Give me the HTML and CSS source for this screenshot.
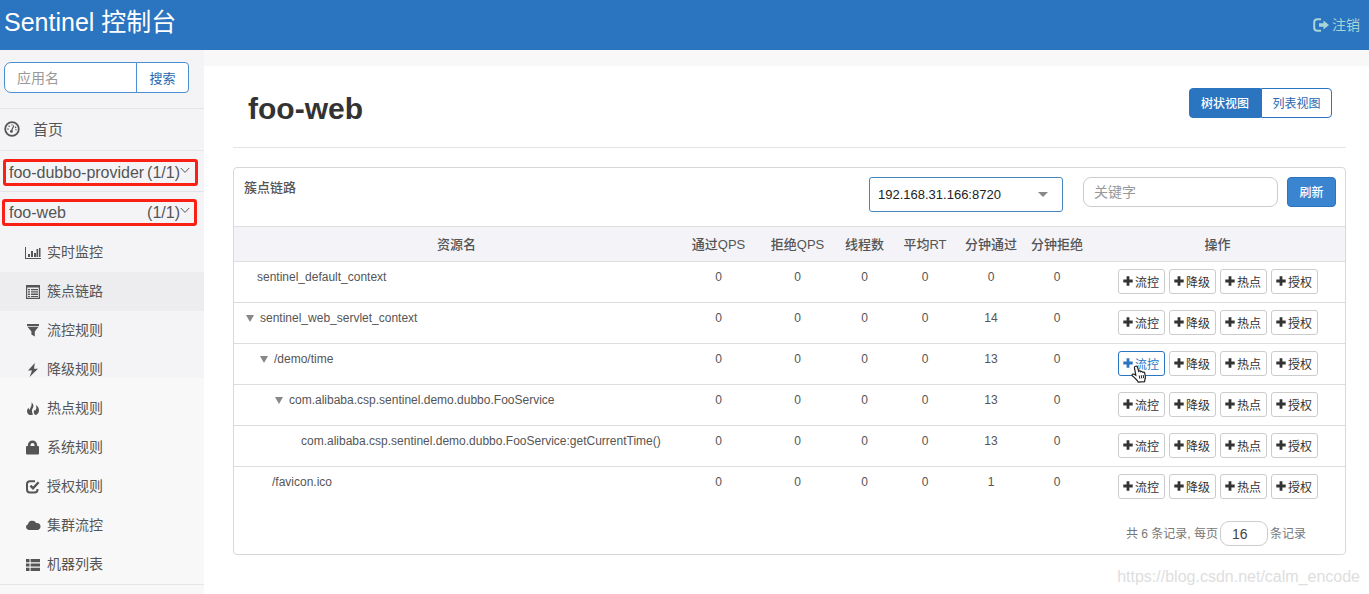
FILE: index.html
```
<!DOCTYPE html>
<html lang="zh-CN">
<head>
    <meta charset="utf-8">
    <title>Sentinel 控制台</title>
    <link rel="stylesheet" href="styles.css">
</head>
<body>
    <svg class="sprite" width="0" height="0">
        <symbol id="plus" viewBox="0 0 10 10"><path d="M3.6 0.3h2.8v3.3h3.3v2.8H6.4v3.3H3.6V6.4H0.3V3.6h3.3z"/></symbol>
    </svg>
    <header class="navbar">
        <a class="brand" href="#">Sentinel 控制台</a>
        <a class="logout" href="#">
            <svg width="16" height="14" viewBox="0 0 16 14"><path d="M8 1.2H4.5Q1.2 1.2 1.2 4.5v5q0 3.3 3.3 3.3H8" fill="none" stroke="currentColor" stroke-width="2"/><path d="M6 5.3h4.5V2.4L16 7l-5.5 4.6V8.7H6z" fill="currentColor"/></svg>
            <span>注销</span>
        </a>
    </header>
    <div class="wrapper">
        <nav class="sidebar">
            <form class="search">
                <input type="text" placeholder="应用名" aria-label="应用名">
                <button type="button">搜索</button>
            </form>
            <a class="home" href="#">
                <svg width="16" height="16" viewBox="0 0 16 16"><circle cx="8" cy="8" r="6.8" fill="none" stroke="currentColor" stroke-width="1.8"/><path d="M7.2 10.6l2.6-6.2" stroke="currentColor" stroke-width="1.2"/><circle cx="7.4" cy="10.4" r="1.4"/><circle cx="4" cy="8" r=".8"/><circle cx="5.2" cy="5.2" r=".8"/><circle cx="8" cy="3.9" r=".7"/><circle cx="11.6" cy="6.4" r=".8"/><circle cx="12" cy="8.8" r=".7"/></svg>
                <span>首页</span>
            </a>
            <div class="app-row">
                <a class="app" href="#">
                    <span class="app-name">foo-dubbo-provider</span>
                    <span>(1/1)</span>
                    <svg width="10" height="7" viewBox="0 0 10 7"><path d="M0.8 1L5 5.4 9.2 1" fill="none" stroke="currentColor"/></svg>
                </a>
            </div>
            <div class="app-row open">
                <a class="app" href="#">
                    <span class="app-name">foo-web</span>
                    <span>(1/1)</span>
                    <svg width="10" height="7" viewBox="0 0 10 7"><path d="M0.8 1L5 5.4 9.2 1" fill="none" stroke="currentColor"/></svg>
                </a>
            </div>
            <ul class="menu">
                <li><a href="#">
                    <svg width="16" height="16" viewBox="0 0 16 16"><path d="M0 2h1v11h15v1H0zM3 9h2v3H3zM6 6h2v6H6zM9 8h2v4H9zM11.5 4h1.7v8h-1.7zM14 3h1.5v9H14z"/></svg>
                    <span>实时监控</span></a></li>
                <li class="active"><a href="#">
                    <svg width="16" height="16" viewBox="0 0 16 16"><path d="M1.6 1.6h12.8v12.8H1.6z" fill="none" stroke="currentColor" stroke-width="1.2"/><path d="M1 1h14v2.4H1zM3 5h2v1.3H3zM6 5h7v1.3H6zM3 7.3h2v1.3H3zM6 7.3h7v1.3H6zM3 9.6h2v1.3H3zM6 9.6h7v1.3H6zM3 11.9h2v1H3zM6 11.9h7v1H6z"/></svg>
                    <span>簇点链路</span></a></li>
                <li><a href="#">
                    <svg width="16" height="16" viewBox="0 0 16 16"><path d="M2 1h12v2H2zM2.4 3.8h11.2L9.8 8.4v5.2L6.4 11.4v-3z"/></svg>
                    <span>流控规则</span></a></li>
                <li><a href="#">
                    <svg width="16" height="16" viewBox="0 0 16 16"><path d="M9.8 1L3 8.6h4L4.6 15 13 6.8H9z"/></svg>
                    <span>降级规则</span></a></li>
                <li><a href="#">
                    <svg width="16" height="16" viewBox="0 0 16 16"><path d="M6.4 1.2C8.8 3 9 5.4 7.6 7.6c-1 1.700-.8 4 .4 5.8C5.800 15.200 2.200 13.400 2 10.400c0-1.500.700-2.600 1.400-3.600.300 1 .600 1.700 1.300 2.200C4.800 7 7.500 4.600 6.400 1.200zM10.800 4c2.400 1.400 3.800 4 3 6.800-.5 1.900-1.900 3.100-3.600 3.300C8.600 12.200 8.300 10 9.400 8.400l.4 1.700c1.700-1.500 2-3.700 1-6.100z"/></svg>
                    <span>热点规则</span></a></li>
                <li><a href="#">
                    <svg width="16" height="16" viewBox="0 0 16 16"><rect x="1" y="6" width="13" height="8.500" rx="1"/><path d="M4.200 7V5a3.300 3.300 0 0 1 6.600 0V7" fill="none" stroke="currentColor" stroke-width="2.600"/></svg>
                    <span>系统规则</span></a></li>
                <li><a href="#">
                    <svg width="16" height="16" viewBox="0 0 16 16"><path d="M10 2.200H5Q2 2.200 2 5v5.500Q2 13.500 5 13.500h4.500q3 0 3-3V10" fill="none" stroke="currentColor" stroke-width="2"/><path d="M5.400 6.600L8 9.200l5.600-6" fill="none" stroke="currentColor" stroke-width="2.400"/></svg>
                    <span>授权规则</span></a></li>
                <li><a href="#">
                    <svg width="16" height="16" viewBox="0 0 16 16"><path d="M3.600 12A3 3 0 0 1 3 6.200a4.400 4.400 0 0 1 8.200-1.100A3.500 3.500 0 1 1 12.200 12z"/></svg>
                    <span>集群流控</span></a></li>
                <li><a href="#">
                    <svg width="16" height="16" viewBox="0 0 16 16"><path d="M1 2h3.500v3.200H1zM5.600 2H15v3.200H5.600zM1 6.400h3.500v3.200H1zM5.600 6.400H15v3.200H5.600zM1 10.800h3.500V14H1zM5.600 10.800H15V14H5.600z"/></svg>
                    <span>机器列表</span></a></li>
            </ul>
        </nav>
        <main class="content">
            <div class="page-header">
                <h1>foo-web</h1>
                <div class="view-switch">
                    <button type="button" class="active">树状视图</button>
                    <button type="button">列表视图</button>
                </div>
            </div>
            <section class="panel">
                <div class="toolbar">
                    <h2>簇点链路</h2>
                    <div class="machine">
                        <select aria-label="机器">
                            <option>192.168.31.166:8720</option>
                        </select>
                    </div>
                    <input class="keyword" type="text" placeholder="关键字" aria-label="关键字">
                    <button type="button" class="refresh">刷新</button>
                </div>
                <table>
                    <thead>
                        <tr>
                            <th>资源名</th>
                            <th class="col-qps">通过QPS</th>
                            <th class="col-qps">拒绝QPS</th>
                            <th class="col-thread">线程数</th>
                            <th class="col-num">平均RT</th>
                            <th class="col-num">分钟通过</th>
                            <th class="col-num">分钟拒绝</th>
                            <th class="col-actions">操作</th>
                        </tr>
                    </thead>
                    <tbody>
                        <tr>
                            <td class="leaf-root">sentinel_default_context</td>
                            <td>0</td><td>0</td><td>0</td><td>0</td><td>0</td><td>0</td>
                            <td><div class="actions">
                                <button type="button"><svg><use href="#plus"/></svg>流控</button>
                                <button type="button"><svg><use href="#plus"/></svg>降级</button>
                                <button type="button"><svg><use href="#plus"/></svg>热点</button>
                                <button type="button"><svg><use href="#plus"/></svg>授权</button>
                            </div></td>
                        </tr>
                        <tr>
                            <td class="level-1"><span class="caret"></span>sentinel_web_servlet_context</td>
                            <td>0</td><td>0</td><td>0</td><td>0</td><td>14</td><td>0</td>
                            <td><div class="actions">
                                <button type="button"><svg><use href="#plus"/></svg>流控</button>
                                <button type="button"><svg><use href="#plus"/></svg>降级</button>
                                <button type="button"><svg><use href="#plus"/></svg>热点</button>
                                <button type="button"><svg><use href="#plus"/></svg>授权</button>
                            </div></td>
                        </tr>
                        <tr>
                            <td class="level-2"><span class="caret"></span>/demo/time</td>
                            <td>0</td><td>0</td><td>0</td><td>0</td><td>13</td><td>0</td>
                            <td><div class="actions">
                                <button type="button" class="hover"><svg><use href="#plus"/></svg>流控</button>
                                <button type="button"><svg><use href="#plus"/></svg>降级</button>
                                <button type="button"><svg><use href="#plus"/></svg>热点</button>
                                <button type="button"><svg><use href="#plus"/></svg>授权</button>
                                <svg class="pointer" viewBox="0 0 16 18"><path d="M4.500 1.200c1-.4 1.700.2 2 1l1.200 4.100c.6-.6 1.700-.5 2 .4.7-.5 1.700-.3 2 .5.900-.4 1.800 0 2 .9l.7 3.400c.2 1.400-.2 2.300-.6 3.200l-.2 1.900-6.500.6-.7-1.600C4.800 14 3.300 12.300 1.500 11c-.8-.7-.5-1.900.6-2 .9 0 1.700.5 2.700 1.200L3.400 2.600c-.1-.6.500-1.200 1.100-1.400z" fill="#fff" stroke="#222" stroke-width="1.200"/><path d="M8.200 10.500l.6 3.200M10.200 10.200l.6 3.200M12.200 10l.5 3.200" stroke="#222"/></svg>
                            </div></td>
                        </tr>
                        <tr>
                            <td class="level-3"><span class="caret"></span>com.alibaba.csp.sentinel.demo.dubbo.FooService</td>
                            <td>0</td><td>0</td><td>0</td><td>0</td><td>13</td><td>0</td>
                            <td><div class="actions">
                                <button type="button"><svg><use href="#plus"/></svg>流控</button>
                                <button type="button"><svg><use href="#plus"/></svg>降级</button>
                                <button type="button"><svg><use href="#plus"/></svg>热点</button>
                                <button type="button"><svg><use href="#plus"/></svg>授权</button>
                            </div></td>
                        </tr>
                        <tr>
                            <td class="leaf-3">com.alibaba.csp.sentinel.demo.dubbo.FooService:getCurrentTime()</td>
                            <td>0</td><td>0</td><td>0</td><td>0</td><td>13</td><td>0</td>
                            <td><div class="actions">
                                <button type="button"><svg><use href="#plus"/></svg>流控</button>
                                <button type="button"><svg><use href="#plus"/></svg>降级</button>
                                <button type="button"><svg><use href="#plus"/></svg>热点</button>
                                <button type="button"><svg><use href="#plus"/></svg>授权</button>
                            </div></td>
                        </tr>
                        <tr>
                            <td class="leaf-1">/favicon.ico</td>
                            <td>0</td><td>0</td><td>0</td><td>0</td><td>1</td><td>0</td>
                            <td><div class="actions">
                                <button type="button"><svg><use href="#plus"/></svg>流控</button>
                                <button type="button"><svg><use href="#plus"/></svg>降级</button>
                                <button type="button"><svg><use href="#plus"/></svg>热点</button>
                                <button type="button"><svg><use href="#plus"/></svg>授权</button>
                            </div></td>
                        </tr>
                    </tbody>
                </table>
                <div class="pager">
                    <label for="page-size">共 6 条记录, 每页</label>
                    <input id="page-size" type="text" value="16">
                    <span>条记录</span>
                </div>
            </section>
            <p class="source">https://blog.csdn.net/calm_encode</p>
        </main>
    </div>
</body>
</html>
```
FILE: styles.css
```
* {
    box-sizing: border-box;
}
body {
    margin: 0;
    min-height: 100vh;
    display: flex;
    flex-direction: column;
    background: #f8f8f9;
    color: #555;
    font-family: "Liberation Sans", "Noto Sans CJK SC", sans-serif;
    font-size: 12px;
}
a {
    color: inherit;
    text-decoration: none;
}
button, input, select {
    font-family: inherit;
    margin: 0;
}
button {
    padding: 0;
    cursor: pointer;
}
svg {
    flex: none;
    fill: currentColor;
}
.sprite {
    position: absolute;
}
::placeholder {
    color: #999;
    opacity: 1;
}

/* top bar */
.navbar {
    height: 50px;
    padding: 0 9px 0 4px;
    display: flex;
    justify-content: space-between;
    align-items: center;
    background: #2a74c0;
}
.brand {
    padding-bottom: 6px;
    color: #fff;
    font-size: 25px;
    line-height: 36px;
}
.logout {
    display: flex;
    align-items: center;
    gap: 3px;
    color: #a9d5d8;
    font-size: 14px;
    line-height: 20px;
}
.wrapper {
    flex: 1;
    display: flex;
}

/* sidebar */
.sidebar {
    flex: none;
    width: 204px;
    background: linear-gradient(#f4f4f6 328px, #f8f8f8 328px);
}
.search {
    display: flex;
    padding: 12px 15px 15px 4px;
    border-bottom: 1px solid #e4e4e6;
}
.search input {
    flex: 1;
    min-width: 0;
    height: 31px;
    padding: 0 12px;
    border: 1px solid #4a8fd0;
    border-radius: 7px 0 0 7px;
    background: #fff;
    font-size: 14px;
}
.search button {
    width: 53px;
    height: 31px;
    margin-left: -1px;
    border: 1px solid #4a8fd0;
    border-radius: 0 4px 4px 0;
    background: #fff;
    color: #2a68b0;
    font-size: 13px;
}
.home {
    height: 42px;
    padding: 0 4px 2px;
    display: flex;
    align-items: center;
    gap: 13px;
    border-bottom: 1px solid #e8e8ea;
    font-size: 15px;
}
.app-row {
    padding: 8px 6px 5px 3px;
    border-bottom: 1px solid #e4e4e6;
}
.app-row.open {
    padding: 7px 7px 7px 2px;
    border-bottom: none;
}
.app {
    height: 27px;
    padding: 0 5px 0 3px;
    display: flex;
    align-items: center;
    border: 3px solid #fb2015;
    border-radius: 3px;
    font-size: 16px;
    line-height: 20px;
}
.app-row.open .app {
    padding: 0 4px;
}
.app-name {
    flex: 1;
}
.app svg {
    margin-bottom: 5px;
}
.menu {
    margin: 0;
    padding: 0;
    list-style: none;
    border-bottom: 1px solid #e6e6e6;
}
.menu a {
    height: 39px;
    padding-left: 25px;
    display: flex;
    align-items: center;
    gap: 6px;
    font-size: 14px;
}
.menu span {
    padding-bottom: 3px;
}
.menu .active {
    background: #ededef;
}

/* content */
.content {
    flex: 1;
    min-width: 0;
    margin-top: 16px;
    padding: 0 23px 0 29px;
    background: #fff;
}
.page-header {
    padding: 22px 14px 17px 15px;
    display: flex;
    justify-content: space-between;
    align-items: flex-start;
    border-bottom: 1px solid #e4e4e4;
}
h1 {
    margin: 0;
    color: #333;
    font-size: 30px;
    line-height: 42px;
}
.view-switch {
    display: flex;
}
.view-switch button {
    width: 71px;
    height: 30px;
    padding-bottom: 2px;
    border: 1px solid #2a74c0;
    border-radius: 0 4px 4px 0;
    background: #fff;
    color: #2a68b0;
    font-size: 12px;
}
.view-switch .active {
    width: 72px;
    border-radius: 4px 0 0 4px;
    background: #2a74c0;
    color: #fff;
    font-weight: 500;
}
.panel {
    margin-top: 19px;
    border: 1px solid #d8d8d8;
    border-radius: 4px;
}
.toolbar {
    height: 58px;
    padding: 9px 9px 0 10px;
    display: flex;
    align-items: flex-start;
}
h2 {
    flex: 1;
    margin: 0;
    font-size: 13px;
    font-weight: 500;
    line-height: 22px;
}
.machine {
    position: relative;
    margin-right: 20px;
}
.machine select {
    appearance: none;
    width: 194px;
    height: 35px;
    padding: 0 8px;
    border: 1px solid #4586bd;
    border-radius: 3px;
    background: #fff;
    color: #222;
    font-size: 13px;
}
.machine::after {
    content: "";
    position: absolute;
    top: 15px;
    right: 15px;
    border: 5px solid transparent;
    border-top-color: #888;
    border-bottom: none;
}
.keyword {
    width: 195px;
    height: 30px;
    margin-right: 9px;
    padding: 0 10px;
    border: 1px solid #ccc;
    border-radius: 8px;
    font-size: 14px;
}
.refresh {
    width: 49px;
    height: 30px;
    padding-bottom: 2px;
    border: 1px solid #2a74c0;
    border-radius: 4px;
    background: #3a84d0;
    color: #fff;
    font-size: 12px;
    font-weight: 500;
}

/* resource tree */
table {
    width: 100%;
    table-layout: fixed;
    border-collapse: separate;
    border-spacing: 0;
}
th {
    height: 36px;
    padding: 0 0 2px;
    border-top: 1px solid #ddd;
    border-bottom: 1px solid #ddd;
    background: #f3f3f8;
    font-size: 13px;
    font-weight: 500;
}
.col-qps {
    width: 79px;
}
.col-thread {
    width: 55px;
}
.col-num {
    width: 66px;
}
.col-actions {
    width: 255px;
}
td {
    height: 41px;
    padding: 7px 0 0;
    border-bottom: 1px solid #ddd;
    vertical-align: top;
    text-align: center;
    line-height: 16px;
}
tr:last-child td {
    height: 40px;
    border-bottom: none;
}
td:first-child {
    text-align: left;
}
td.leaf-root {
    padding-left: 23px;
}
td.level-1 {
    padding-left: 12px;
}
td.level-2 {
    padding-left: 26px;
}
td.level-3 {
    padding-left: 41px;
}
td.leaf-1 {
    padding-left: 38px;
}
td.leaf-3 {
    padding-left: 67px;
}
.caret {
    display: inline-block;
    margin-right: 6px;
    border: 4px solid transparent;
    border-top: 7px solid #888;
    border-bottom: none;
}
.actions {
    position: relative;
    display: flex;
    justify-content: center;
    gap: 4px;
}
.actions button {
    width: 47px;
    height: 25px;
    padding-bottom: 1px;
    display: flex;
    align-items: center;
    justify-content: center;
    gap: 2px;
    border: 1px solid #ccc;
    border-radius: 3px;
    background: #fff;
    color: #333;
    font-size: 12px;
}
.actions button svg {
    width: 10px;
    height: 10px;
}
.actions .hover {
    border-color: #2a74c0;
    color: #2a74c0;
}
.pointer {
    position: absolute;
    top: 14px;
    left: 41px;
    width: 16px;
    height: 18px;
}
.pager {
    padding: 14px 39px 8px 0;
    display: flex;
    justify-content: flex-end;
    align-items: center;
    gap: 2px;
    color: #777;
}
.pager label, .pager span {
    padding-bottom: 2px;
}
.pager input {
    width: 48px;
    height: 25px;
    padding: 0 11px;
    border: 1px solid #ccc;
    border-radius: 9px;
    color: #444;
    font-size: 14px;
}
.source {
    margin: 12px -14px 0 0;
    color: #dedede;
    font-size: 16px;
    line-height: 20px;
    text-align: right;
}
```
